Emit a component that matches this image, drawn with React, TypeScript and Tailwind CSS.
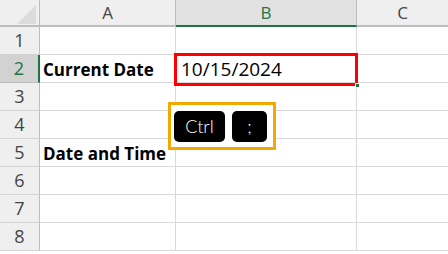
const rows = [1, 2, 3, 4, 5, 6, 7, 8];

const font = { fontFamily: '"Open Sans", "Noto Sans", sans-serif' };
const keyFont = { fontFamily: '"Lato", "Open Sans", sans-serif' };

function Cell({ children, className = "" }: { children?: React.ReactNode; className?: string }) {
  return (
    <div className={`h-[28px] border-b border-r border-[#d9d9d9] flex items-center overflow-visible whitespace-nowrap ${className}`}>
      {children}
    </div>
  );
}

export default function App() {
  return (
    <div className="relative w-[448px] h-[254px] bg-white overflow-hidden text-black" style={font}>
      <div className="grid grid-cols-[40px_136px_181px_91px]">
        {/* header row */}
        <div className="h-[27px] bg-[#efefef] border-r border-b-2 border-[#bdbdbd] relative">
          <svg className="absolute left-[17px] top-[5px]" width="19" height="19" viewBox="0 0 19 19">
            <polygon points="19,0 19,19 0,19" fill="#dcdcdc" />
          </svg>
        </div>
        <div className="h-[27px] bg-[#efefef] border-r border-b-2 border-[#bdbdbd] flex items-center justify-center text-[17px] text-[#444]">
          A
        </div>
        <div className="h-[27px] bg-[#e1e1e1] border-r border-[#bdbdbd] border-b-2 border-b-[#217346] flex items-center justify-center text-[17px] text-[#217346]">
          B
        </div>
        <div className="h-[27px] bg-[#efefef] border-b-2 border-[#bdbdbd] flex items-center justify-center text-[17px] text-[#444]">
          C
        </div>

        {rows.map((r) => (
          <Row key={r} r={r} />
        ))}
      </div>

      {/* selected cell outline */}
      <div className="absolute left-[174px] top-[53px] w-[184px] h-[33px] border-[3px] border-[#ff0000]" />
      <div className="absolute left-[355px] top-[83px] w-[5px] h-[5px] bg-[#217346] border border-white" />

      {/* shortcut keys */}
      <div className="absolute left-[168px] top-[102px] w-[108px] h-[48px] border-[3px] border-[#f5a800] bg-white flex items-center gap-[7px] pl-[3px]">
        <div className="w-[51px] h-[31px] bg-black rounded-[5px] flex items-center justify-center text-white text-[18px] font-light" style={keyFont}>
          Ctrl
        </div>
        <div className="w-[35px] h-[31px] bg-black rounded-[5px] flex items-center justify-center text-white text-[18px] font-light" style={keyFont}>
          ;
        </div>
      </div>
    </div>
  );
}

function Row({ r }: { r: number }) {
  const active = r === 2;
  return (
    <>
      <div
        className={`h-[28px] border-b flex items-center justify-center text-[18px] ${
          active
            ? "bg-[#d2d2d2] border-b-[#bdbdbd] border-r-2 border-r-[#217346] text-[#217346]"
            : "bg-[#efefef] border-b-[#d4d4d4] border-r border-r-[#bdbdbd] text-[#444]"
        }`}
      >
        {r}
      </div>
      <Cell className="pl-[3px] pt-[2px] text-[17px] font-bold">
        {r === 2 ? "Current Date" : r === 5 ? "Date and Time" : null}
      </Cell>
      <Cell className="pl-[5px] pt-[2px] text-[19px]">{r === 2 ? "10/15/2024" : null}</Cell>
      <Cell className="border-r-0" />
    </>
  );
}
